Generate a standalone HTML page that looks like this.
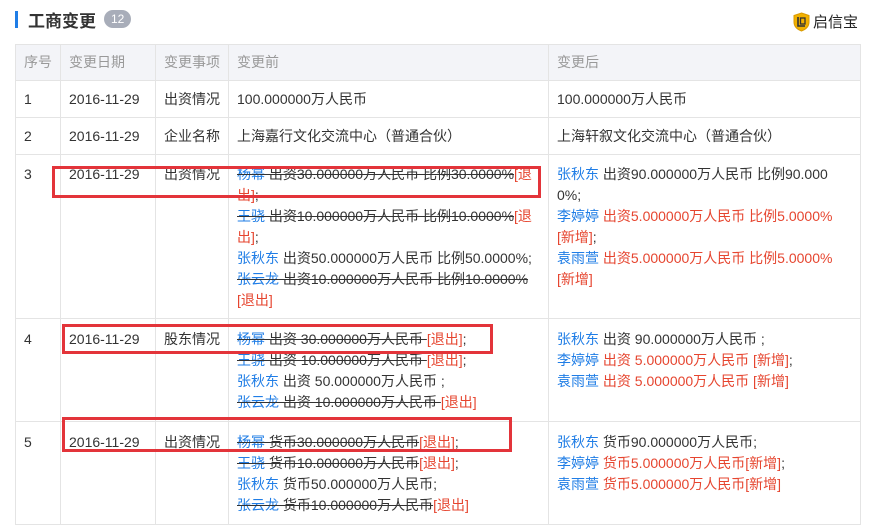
<!DOCTYPE html>
<html><head><meta charset="utf-8"><style>
*{margin:0;padding:0;box-sizing:border-box}
body{width:875px;height:532px;background:#fff;font-family:"Liberation Sans","Noto Sans CJK SC",sans-serif;font-size:14px;color:#333;position:relative;overflow:hidden}
.title{position:absolute;left:15px;top:9px;height:20px;display:flex;align-items:center}
.bar{width:3px;height:17px;background:#1f7de6;margin-right:10px}
.title b{font-size:17px;color:#333;font-weight:bold}
.badge{margin-left:8px;background:#a8adb9;color:#fff;border-radius:9px;font-size:12px;padding:1px 7px;line-height:16px}
.logo{position:absolute;left:793px;top:11px;display:flex;align-items:center;font-size:15px;color:#222}
table{position:absolute;left:15px;top:44px;width:845px;border-collapse:collapse;table-layout:fixed}
td,th{border:1px solid #e4e4e4;vertical-align:top;text-align:left;padding:0 8px;line-height:21px;font-weight:normal;white-space:nowrap;overflow:hidden}
th{background:#f3f4f8;color:#999;height:36px;vertical-align:middle}
tr.s td{height:37px;vertical-align:middle}
td.l{padding-top:9px;padding-bottom:7px}
tr.m td.l{padding-top:10px;padding-bottom:8px}
.n{color:#1f7de6}.r{color:#e6452f}.d{text-decoration:line-through}
.box{position:absolute;border:3px solid #e3343a}
</style></head><body>
<div class="title"><div class="bar"></div><b>工商变更</b><span class="badge">12</span></div>
<div class="logo"><svg width="17" height="20" viewBox="0 0 17 20"><path d="M8.5 1L16 3.5V10c0 4.5-3.5 7.5-7.5 9C4.5 17.5 1 14.5 1 10V3.5z" fill="#f2b100" stroke="#d99a00"/><path d="M5 5v9h7" stroke="#333" stroke-width="1.6" fill="none"/><rect x="7.5" y="6" width="4.5" height="6" fill="none" stroke="#333" stroke-width="1.3"/></svg><span style="margin-left:3px">启信宝</span></div>
<table>
<colgroup><col style="width:45px"><col style="width:95px"><col style="width:73px"><col style="width:320px"><col style="width:312px"></colgroup>
<tr><th>序号</th><th>变更日期</th><th>变更事项</th><th>变更前</th><th>变更后</th></tr>
<tr class="s"><td>1</td><td>2016-11-29</td><td>出资情况</td><td>100.000000万人民币</td><td>100.000000万人民币</td></tr>
<tr class="s"><td>2</td><td>2016-11-29</td><td>企业名称</td><td>上海嘉行文化交流中心（普通合伙）</td><td>上海轩叙文化交流中心（普通合伙）</td></tr>
<tr><td class="l">3</td><td class="l">2016-11-29</td><td class="l">出资情况</td><td class="l"><span class="d"><span class="n">杨幂</span> 出资30.000000万人民币 比例30.0000%</span><span class="r">[退<br>出]</span>;<br><span class="d"><span class="n">王骁</span> 出资10.000000万人民币 比例10.0000%</span><span class="r">[退<br>出]</span>;<br><span class="n">张秋东</span> 出资50.000000万人民币 比例50.0000%;<br><span class="d"><span class="n">张云龙</span> 出资10.000000万人民币 比例10.0000%</span><br><span class="r">[退出]</span></td>
<td class="l"><span class="n">张秋东</span> 出资90.000000万人民币 比例90.000<br>0%;<br><span class="n">李婷婷</span> <span class="r">出资5.000000万人民币 比例5.0000%<br>[新增]</span>;<br><span class="n">袁雨萱</span> <span class="r">出资5.000000万人民币 比例5.0000%<br>[新增]</span></td></tr>
<tr class="m"><td class="l">4</td><td class="l">2016-11-29</td><td class="l">股东情况</td><td class="l"><span class="d"><span class="n">杨幂</span> 出资 30.000000万人民币 </span><span class="r">[退出]</span>;<br><span class="d"><span class="n">王骁</span> 出资 10.000000万人民币 </span><span class="r">[退出]</span>;<br><span class="n">张秋东</span> 出资 50.000000万人民币 ;<br><span class="d"><span class="n">张云龙</span> 出资 10.000000万人民币 </span><span class="r">[退出]</span></td>
<td class="l"><span class="n">张秋东</span> 出资 90.000000万人民币 ;<br><span class="n">李婷婷</span> <span class="r">出资 5.000000万人民币 [新增]</span>;<br><span class="n">袁雨萱</span> <span class="r">出资 5.000000万人民币 [新增]</span></td></tr>
<tr class="m"><td class="l">5</td><td class="l">2016-11-29</td><td class="l">出资情况</td><td class="l"><span class="d"><span class="n">杨幂</span> 货币30.000000万人民币</span><span class="r">[退出]</span>;<br><span class="d"><span class="n">王骁</span> 货币10.000000万人民币</span><span class="r">[退出]</span>;<br><span class="n">张秋东</span> 货币50.000000万人民币;<br><span class="d"><span class="n">张云龙</span> 货币10.000000万人民币</span><span class="r">[退出]</span></td>
<td class="l"><span class="n">张秋东</span> 货币90.000000万人民币;<br><span class="n">李婷婷</span> <span class="r">货币5.000000万人民币[新增]</span>;<br><span class="n">袁雨萱</span> <span class="r">货币5.000000万人民币[新增]</span></td></tr>
</table>
<div class="box" style="left:52px;top:166px;width:489px;height:32px"></div>
<div class="box" style="left:62px;top:324px;width:431px;height:30px"></div>
<div class="box" style="left:62px;top:417px;width:450px;height:35px"></div>
</body></html>
